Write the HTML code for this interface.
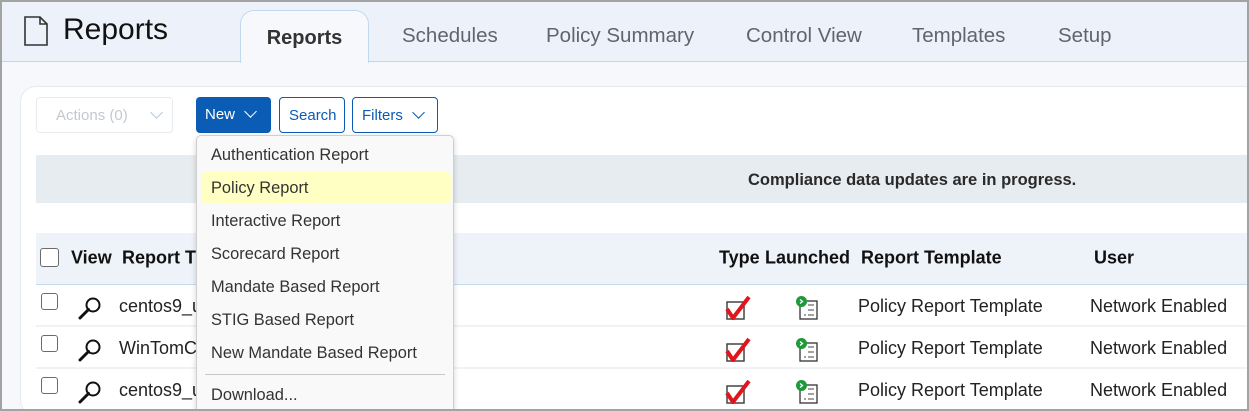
<!DOCTYPE html>
<html style="width:1249px;height:411px;overflow:hidden"><head><style>
*{box-sizing:border-box;margin:0;padding:0}
body{width:1249px;height:411px;overflow:hidden;font-family:"Liberation Sans",Arial,sans-serif;background:#f6f8fc;position:relative}
.frame{position:absolute;left:0;top:0;width:1249px;height:411px;border:2px solid #a3a3a3;z-index:50;pointer-events:none}
.hdr{position:absolute;left:0;top:0;width:1249px;height:62px;background:#edf2fa;border-bottom:1px solid #bcd6ef}
.title{position:absolute;left:63px;top:13px;font-size:30px;color:#111}
.tab{position:absolute;top:36px;transform:translateY(-50%);font-size:20.5px;color:#5d6670}
.atab{position:absolute;left:240px;top:10px;width:129px;height:53px;background:#f6f8fc;border:1px solid #c2d8ee;border-bottom:none;border-radius:14px 14px 0 0;font-size:20px;font-weight:bold;color:#333;text-align:center;line-height:54px}
.card{position:absolute;left:20px;top:86px;width:1240px;height:330px;background:#fff;border:1px solid #e6e9ef;border-radius:16px}
.btn{position:absolute;top:97px;height:36px;border-radius:4px;font-size:15px;line-height:36px;padding-left:9px}
.chev{display:inline-block;width:9px;height:9px;border-right:1.5px solid currentColor;border-bottom:1.5px solid currentColor;transform:rotate(45deg);position:relative;top:-3px}
.banner{position:absolute;left:36px;top:155px;width:1213px;height:48px;background:#e7ecf0;font-size:16.5px;font-weight:bold;color:#2a2a2a;line-height:50px;padding-left:712px}
.thead{position:absolute;left:36px;top:233px;width:1213px;height:52px;background:#eef3fa;border-bottom:1px solid #c6dbf0}
.th{position:absolute;top:258px;transform:translateY(-50%);font-size:18px;font-weight:bold;color:#111}
.row{position:absolute;left:36px;width:1213px;height:42px;border-bottom:2px solid #f1f2f4}
.td{position:absolute;font-size:18px;color:#222}
.cb{position:absolute;width:17px;height:17px;border:1.5px solid #6b6b6b;border-radius:3px;background:#fff}
.menu{position:absolute;left:196px;top:135px;width:258px;height:290px;background:#f9f9f9;border:1px solid #cfcfcf;border-radius:5px;box-shadow:0 2px 6px rgba(0,0,0,.18);z-index:10}
.mi{position:absolute;left:14px;font-size:16.4px;color:#333}
</style></head><body>
<div class="hdr"></div>
<svg style="position:absolute;left:24px;top:16px" width="24" height="30" viewBox="0 0 24 30"><path d="M1 1H16L23 8V29H1Z M16 1V8H23" fill="none" stroke="#333" stroke-width="1.6"/></svg>
<div class="title">Reports</div>
<div class="atab">Reports</div>
<div class="tab" style="left:402px">Schedules</div>
<div class="tab" style="left:546px">Policy Summary</div>
<div class="tab" style="left:746px">Control View</div>
<div class="tab" style="left:912px">Templates</div>
<div class="tab" style="left:1058px">Setup</div>

<div class="card"></div>
<div class="btn" style="left:36px;width:137px;border:1px solid #e8ecf0;color:#c3c8cf;padding-left:19px">Actions (0)<span class="chev" style="margin-left:24px;color:#b6c8dc"></span></div>
<div class="btn" style="left:196px;width:75px;background:#0b5cb5;color:#fff">New<span class="chev" style="margin-left:11px"></span></div>
<div class="btn" style="left:279px;width:66px;border:1px solid #0b5cb5;color:#0b5cb5">Search</div>
<div class="btn" style="left:352px;width:86px;border:1px solid #0b5cb5;color:#0b5cb5">Filters<span class="chev" style="margin-left:11px"></span></div>

<div class="banner">Compliance data updates are in progress.</div>
<div class="thead"></div>
<div class="cb" style="left:40px;top:248px;width:19px;height:19px"></div>
<div class="th" style="left:71px">View</div>
<div class="th" style="left:122px">Report T</div>
<div class="th" style="left:719px">Type</div>
<div class="th" style="left:765px">Launched</div>
<div class="th" style="left:861px">Report Template</div>
<div class="th" style="left:1094px">User</div>

<div class="row" style="top:285px"></div>
<div class="row" style="top:327px"></div>
<div class="row" style="top:369px;border:none"></div>

<div class="cb" style="left:41px;top:293px"></div>
<div class="cb" style="left:41px;top:335px"></div>
<div class="cb" style="left:41px;top:377px"></div>
<svg style="position:absolute;left:78px;top:295px" width="26" height="26" viewBox="0 0 26 26"><circle cx="15" cy="10" r="6.5" fill="none" stroke="#111" stroke-width="2"/><path d="M10.5 14.5L2 23" stroke="#111" stroke-width="3" stroke-linecap="round"/></svg>
<svg style="position:absolute;left:78px;top:337px" width="26" height="26" viewBox="0 0 26 26"><circle cx="15" cy="10" r="6.5" fill="none" stroke="#111" stroke-width="2"/><path d="M10.5 14.5L2 23" stroke="#111" stroke-width="3" stroke-linecap="round"/></svg>
<svg style="position:absolute;left:78px;top:379px" width="26" height="26" viewBox="0 0 26 26"><circle cx="15" cy="10" r="6.5" fill="none" stroke="#111" stroke-width="2"/><path d="M10.5 14.5L2 23" stroke="#111" stroke-width="3" stroke-linecap="round"/></svg>
<div class="td" style="left:119px;top:296px">centos9_u</div>
<div class="td" style="left:119px;top:338px">WinTomC</div>
<div class="td" style="left:119px;top:380px">centos9_u</div>

<svg style="position:absolute;left:725px;top:296px" width="26" height="24" viewBox="0 0 26 24"><rect x="2" y="6" width="17" height="17" fill="#fff" stroke="#444" stroke-width="1.5"/><path d="M2 13L8 22L24 1" fill="none" stroke="#e0161c" stroke-width="4"/></svg>
<svg style="position:absolute;left:725px;top:338px" width="26" height="24" viewBox="0 0 26 24"><rect x="2" y="6" width="17" height="17" fill="#fff" stroke="#444" stroke-width="1.5"/><path d="M2 13L8 22L24 1" fill="none" stroke="#e0161c" stroke-width="4"/></svg>
<svg style="position:absolute;left:725px;top:380px" width="26" height="24" viewBox="0 0 26 24"><rect x="2" y="6" width="17" height="17" fill="#fff" stroke="#444" stroke-width="1.5"/><path d="M2 13L8 22L24 1" fill="none" stroke="#e0161c" stroke-width="4"/></svg>

<svg style="position:absolute;left:795px;top:295px" width="24" height="26" viewBox="0 0 24 26"><rect x="5" y="6" width="17" height="18" fill="#fff" stroke="#333" stroke-width="1.3"/><path d="M9 20H11M13 20H19M13 15H19M13 10H19" stroke="#444"/><circle cx="6.5" cy="6.5" r="5.5" fill="#1f9a3a"/><path d="M5 4.5L7.5 6.5L5 8.5" stroke="#fff" fill="none" stroke-width="1.3"/></svg>
<svg style="position:absolute;left:795px;top:337px" width="24" height="26" viewBox="0 0 24 26"><rect x="5" y="6" width="17" height="18" fill="#fff" stroke="#333" stroke-width="1.3"/><path d="M9 20H11M13 20H19M13 15H19M13 10H19" stroke="#444"/><circle cx="6.5" cy="6.5" r="5.5" fill="#1f9a3a"/><path d="M5 4.5L7.5 6.5L5 8.5" stroke="#fff" fill="none" stroke-width="1.3"/></svg>
<svg style="position:absolute;left:795px;top:379px" width="24" height="26" viewBox="0 0 24 26"><rect x="5" y="6" width="17" height="18" fill="#fff" stroke="#333" stroke-width="1.3"/><path d="M9 20H11M13 20H19M13 15H19M13 10H19" stroke="#444"/><circle cx="6.5" cy="6.5" r="5.5" fill="#1f9a3a"/><path d="M5 4.5L7.5 6.5L5 8.5" stroke="#fff" fill="none" stroke-width="1.3"/></svg>

<div class="td" style="left:858px;top:296px">Policy Report Template</div>
<div class="td" style="left:858px;top:338px">Policy Report Template</div>
<div class="td" style="left:858px;top:380px">Policy Report Template</div>
<div class="td" style="left:1090px;top:296px">Network Enabled</div>
<div class="td" style="left:1090px;top:338px">Network Enabled</div>
<div class="td" style="left:1090px;top:380px">Network Enabled</div>

<div class="menu">
<div style="position:absolute;left:4px;top:36px;width:250px;height:32px;background:#ffffc4;border-radius:5px"></div>
<div class="mi" style="top:10px">Authentication Report</div>
<div class="mi" style="top:43px">Policy Report</div>
<div class="mi" style="top:76px">Interactive Report</div>
<div class="mi" style="top:109px">Scorecard Report</div>
<div class="mi" style="top:142px">Mandate Based Report</div>
<div class="mi" style="top:175px">STIG Based Report</div>
<div class="mi" style="top:208px">New Mandate Based Report</div>
<div style="position:absolute;left:8px;top:238px;width:240px;height:1px;background:#c8c8c8"></div>
<div class="mi" style="top:250px">Download...</div>
</div>
<div class="frame"></div>
</body></html>
